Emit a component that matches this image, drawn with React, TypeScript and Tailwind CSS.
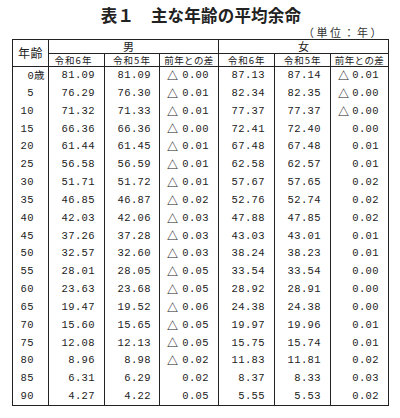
const rows: [string, string, string, string, string, string, string][] = [
  ["0", "81.09", "81.09", "△ 0.00", "87.13", "87.14", "△ 0.01"],
  ["5", "76.29", "76.30", "△ 0.01", "82.34", "82.35", "△ 0.00"],
  ["10", "71.32", "71.33", "△ 0.01", "77.37", "77.37", "△ 0.00"],
  ["15", "66.36", "66.36", "△ 0.00", "72.41", "72.40", "0.00"],
  ["20", "61.44", "61.45", "△ 0.01", "67.48", "67.48", "0.01"],
  ["25", "56.58", "56.59", "△ 0.01", "62.58", "62.57", "0.01"],
  ["30", "51.71", "51.72", "△ 0.01", "57.67", "57.65", "0.02"],
  ["35", "46.85", "46.87", "△ 0.02", "52.76", "52.74", "0.02"],
  ["40", "42.03", "42.06", "△ 0.03", "47.88", "47.85", "0.02"],
  ["45", "37.26", "37.28", "△ 0.03", "43.03", "43.01", "0.01"],
  ["50", "32.57", "32.60", "△ 0.03", "38.24", "38.23", "0.01"],
  ["55", "28.01", "28.05", "△ 0.05", "33.54", "33.54", "0.00"],
  ["60", "23.63", "23.68", "△ 0.05", "28.92", "28.91", "0.00"],
  ["65", "19.47", "19.52", "△ 0.06", "24.38", "24.38", "0.00"],
  ["70", "15.60", "15.65", "△ 0.05", "19.97", "19.96", "0.01"],
  ["75", "12.08", "12.13", "△ 0.05", "15.75", "15.74", "0.01"],
  ["80", "8.96", "8.98", "△ 0.02", "11.83", "11.81", "0.02"],
  ["85", "6.31", "6.29", "0.02", "8.37", "8.33", "0.03"],
  ["90", "4.27", "4.22", "0.05", "5.55", "5.53", "0.02"],
];

const jp = "font-['Noto_Sans_CJK_JP','Noto_Sans',sans-serif]";
const num = "font-['Liberation_Mono','DejaVu_Sans_Mono',monospace] text-[10.5px] tracking-[0.4px]";

function Diff({ value }: { value: string }) {
  const neg = value.startsWith("△");
  const n = neg ? value.slice(2) : value;
  return (
    <div className="flex items-center justify-between pl-[7px] pr-[9px]">
      <span className={`${jp} text-[11px] font-bold leading-none -translate-y-[0.5px]`}>{neg ? "△" : ""}</span>
      <span className={num}>{n}</span>
    </div>
  );
}

export default function App() {
  return (
    <div className="w-[400px] h-[418px] bg-white text-[#222] overflow-hidden">
      <h1 className={`${jp} pt-[4px] text-center text-[16.5px] font-bold leading-[22px] tracking-[0.2px] pl-[2px]`}>
        表１　主な年齢の平均余命
      </h1>
      <div className={`${jp} text-right pr-[16px] text-[11px] leading-[13px] tracking-[2.5px] text-[#333]`}>
        （単位：年）
      </div>

      <table className="ml-[12px] w-[376px] table-fixed border-collapse border-[1.5px] border-[#222]">
        <colgroup>
          <col className="w-[36px]" />
          <col className="w-[56px]" />
          <col className="w-[55px]" />
          <col className="w-[59px]" />
          <col className="w-[56px]" />
          <col className="w-[56px]" />
          <col className="w-[58px]" />
        </colgroup>
        <thead className={jp}>
          <tr className="h-[14px]">
            <th
              rowSpan={2}
              className="border-[1.5px] border-[#222] text-[12px] font-normal leading-none tracking-[0.5px]"
            >
              年齢
            </th>
            <th colSpan={3} className="border border-[#222] border-l-[1.5px] p-0 text-[11px] font-normal leading-[11px] pr-[10px]">
              男
            </th>
            <th colSpan={3} className="border border-[#222] border-l-[1.5px] p-0 text-[11px] font-normal leading-[11px]">
              女
            </th>
          </tr>
          <tr className="h-[13px] text-[9.5px] font-normal leading-[11px] tracking-[1px]">
            <th className="border border-[#222] p-0 font-normal pr-[6px]">令和6年</th>
            <th className="border border-[#222] p-0 font-normal">令和5年</th>
            <th className="border border-[#222] p-0 font-normal tracking-[0.4px]">前年との差</th>
            <th className="border border-[#222] border-l-[1.5px] p-0 font-normal">令和6年</th>
            <th className="border border-[#222] p-0 font-normal">令和5年</th>
            <th className="border border-[#222] p-0 font-normal tracking-[0.4px]">前年との差</th>
          </tr>
        </thead>
        <tbody>
          {rows.map((r) => (
            <tr key={r[0]} className="h-[17.84px]">
              <td className={`${num} border-x-[1.5px] border-[#222] text-right pr-[14px] leading-none`}>
                {r[0]}
                {r[0] === "0" && <span className={`${jp} inline-block -mr-[11px] text-[10.5px]`}>歳</span>}
              </td>
              <td className={`${num} border-x border-[#222] text-right pr-[9px] leading-none`}>{r[1]}</td>
              <td className={`${num} border-x border-[#222] text-right pr-[8px] leading-none`}>{r[2]}</td>
              <td className="border-x border-[#222] border-r-[1.5px] leading-none">
                <Diff value={r[3]} />
              </td>
              <td className={`${num} border-x border-[#222] text-right pr-[9px] leading-none`}>{r[4]}</td>
              <td className={`${num} border-x border-[#222] text-right pr-[9px] leading-none`}>{r[5]}</td>
              <td className="border-x border-[#222] leading-none">
                <Diff value={r[6]} />
              </td>
            </tr>
          ))}
        </tbody>
      </table>
    </div>
  );
}
